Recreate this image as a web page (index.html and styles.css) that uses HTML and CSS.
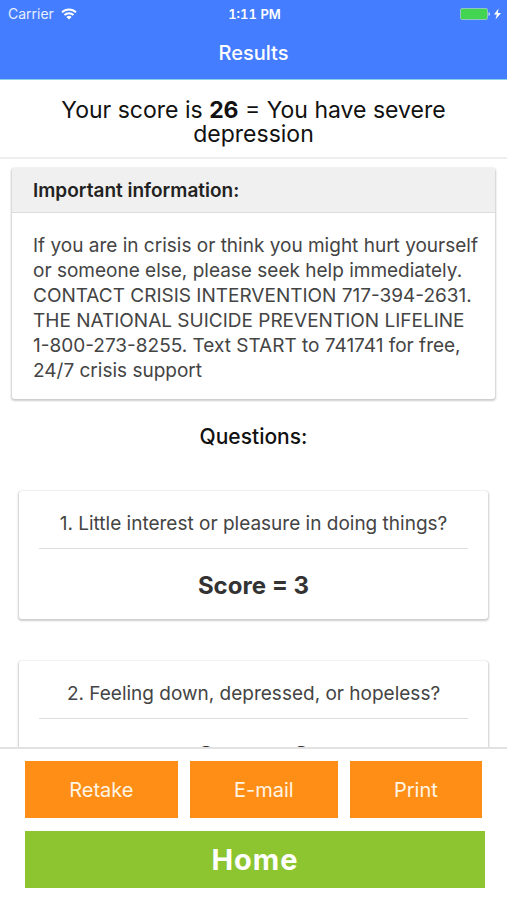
FILE: index.html
```html
<!DOCTYPE html>
<html lang="en">
<head>
    <meta charset="UTF-8">
    <meta name="viewport" content="width=device-width, initial-scale=1.0">
    <title>Results</title>
    <link rel="stylesheet" href="styles.css">
</head>
<body>

    <header class="top">
        <div class="status-bar">
            <div class="carrier">
                <span>Carrier</span>
                <svg width="16" height="12" viewBox="0 0 16 12" fill="none" stroke="#fff" stroke-width="2">
                    <path d="M1 4.400a10 10 0 0 1 14 0"/>
                    <path d="M3.500 7a6.400 6.400 0 0 1 9 0"/>
                    <path d="M8 11.600L5.400 9a3.700 3.700 0 0 1 5.200 0z" fill="#fff" stroke="none"/>
                </svg>
            </div>
            <span class="time">1:11 PM</span>
            <div class="battery">
                <svg width="42" height="14" viewBox="0 0 42 14">
                    <rect x="1.500" y="1.500" width="27" height="11" rx="1.500" fill="#43d551" stroke="#8fc6c4"/>
                    <path d="M29.500 5.200c2 0 2 3.600 0 3.600z" fill="#c5dcff"/>
                    <path d="M39.500 1.500L35 7.600h2.800L36.500 12.500 42 6h-3.200z" fill="#fff"/>
                </svg>
            </div>
        </div>
        <h1>Results</h1>
    </header>

    <p class="score">Your score is <b>26</b> = You have severe depression</p>

    <main class="content">
        <!-- Crisis info -->
        <section class="card info">
            <h2>Important information:</h2>
            <p>If you are in crisis or think you might hurt yourself or someone else, please seek help immediately. CONTACT CRISIS INTERVENTION 717-394-2631. THE NATIONAL SUICIDE PREVENTION LIFELINE <span class="phone">1-800-273-8255.</span> Text START to 741741 for free, 24/7 crisis support</p>
        </section>

        <!-- Answers -->
        <h2 class="title">Questions:</h2>
        <section class="card question">
            <p>1. Little interest or pleasure in doing things?</p>
            <h3>Score = 3</h3>
        </section>
        <section class="card question">
            <p>2. Feeling down, depressed, or hopeless?</p>
            <h3>Score = 3</h3>
        </section>
    </main>

    <footer class="actions">
        <div class="row">
            <button type="button">Retake</button>
            <button type="button">E-mail</button>
            <button type="button">Print</button>
        </div>
        <button type="button" class="home">Home</button>
    </footer>

</body>
</html>
```

FILE: styles.css
```css
* {
    box-sizing: border-box;
}
body {
    margin: 0;
    height: 100vh;
    display: flex;
    flex-direction: column;
    overflow: hidden;
    background-color: white;
    color: #444;
    font-family: Inter, "Liberation Sans", sans-serif;
    font-size: 19px;
}
h1, h2, h3, p {
    margin: 0;
}
.top {
    flex: none;
    background-color: #447dff;
    color: white;
    text-align: center;
    border-bottom: 1px solid #8bcfe5;
}
.status-bar {
    display: grid;
    grid-template-columns: 1fr auto 1fr;
    align-items: center;
    height: 27px;
    padding: 0 6px 0 8px;
    font-size: 14px;
}
.carrier {
    display: flex;
    align-items: center;
    gap: 7px;
    color: #e6eeff;
}
.time {
    font-size: 13px;
    font-weight: 600;
    font-variant-numeric: tabular-nums;
}
.battery {
    display: flex;
    justify-content: flex-end;
}
h1 {
    font-size: 20px;
    font-weight: 500;
    line-height: 52px;
}
.score {
    flex: none;
    padding: 18px 40px 11px;
    border-bottom: 2px solid #eee;
    color: #111;
    font-size: 23px;
    line-height: 24px;
    text-align: center;
}
.content {
    flex: 1;
    min-height: 0;
    padding: 9px 12px 0;
    overflow: hidden;
}
.card {
    border-radius: 3px;
    background-color: white;
    box-shadow: 0 1px 2px 1px rgba(0, 0, 0, 0.2);
}
.info h2 {
    padding: 2px 21px 0;
    border-bottom: 1px solid #ddd;
    border-radius: 3px 3px 0 0;
    background-color: #f0f0f0;
    color: #222;
    font-size: 19px;
    font-weight: 600;
    line-height: 42px;
}
.info p {
    padding: 20px 14px 16px 21px;
    line-height: 25px;
}
.phone {
    white-space: nowrap;
}
.title {
    padding: 26px 0 42px;
    color: #111;
    font-size: 21px;
    font-weight: 500;
    line-height: 24px;
    text-align: center;
}
.question {
    margin: 0 7px 42px;
    padding: 9px 20px 10px;
    text-align: center;
}
.question p {
    border-bottom: 1px solid #ddd;
    line-height: 48px;
}
.question h3 {
    padding-top: 14px;
    color: #333;
    font-size: 24px;
    font-weight: 700;
    line-height: 46px;
}
.actions {
    flex: none;
    display: flex;
    flex-direction: column;
    gap: 13px;
    padding: 12px 22px 12px 25px;
    border-top: 2px solid #e2e2e2;
}
.row {
    display: flex;
    gap: 12px;
    padding-right: 3px;
}
button {
    flex: auto;
    height: 57px;
    padding: 0;
    border: none;
    background-color: #ff8e17;
    color: #fff5e5;
    font-family: inherit;
    font-size: 20px;
    cursor: pointer;
}
.home {
    flex: none;
    background-color: #8cc52f;
    color: white;
    font-size: 29px;
    font-weight: 700;
    letter-spacing: 1px;
}
```
